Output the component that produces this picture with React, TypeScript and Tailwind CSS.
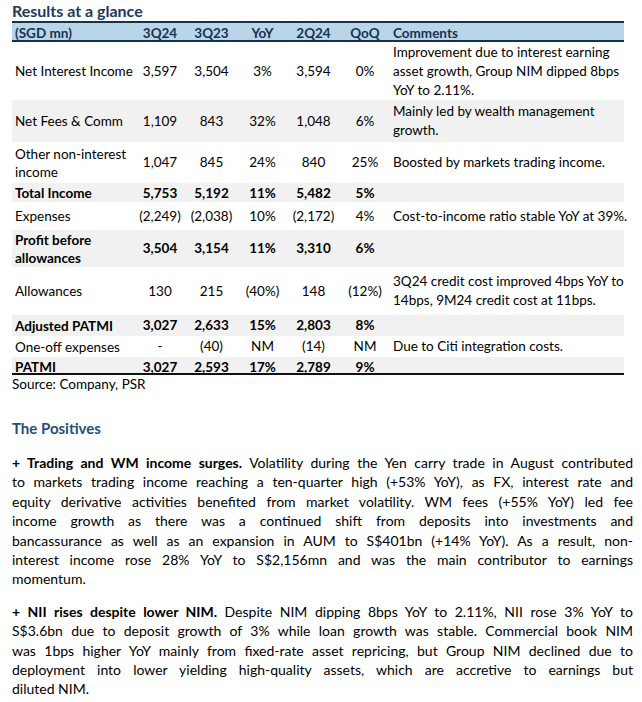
import React from "react";

type Row = {
  label: React.ReactNode;
  vals: string[];
  comment?: React.ReactNode;
  bold?: boolean;
  gray?: boolean;
  h: string;
};

const ROWS: Row[] = [
  {
    label: "Net Interest Income",
    vals: ["3,597", "3,504", "3%", "3,594", "0%"],
    comment: (
      <>
        Improvement due to interest earning
        <br />
        asset growth, Group NIM dipped 8bps
        <br />
        YoY to 2.11%.
      </>
    ),
    h: "h-[58px]",
  },
  {
    label: "Net Fees & Comm",
    vals: ["1,109", "843", "32%", "1,048", "6%"],
    comment: (
      <>
        Mainly led by wealth management
        <br />
        growth.
      </>
    ),
    gray: true,
    h: "h-[42px]",
  },
  {
    label: (
      <>
        Other non-interest
        <br />
        income
      </>
    ),
    vals: ["1,047", "845", "24%", "840", "25%"],
    comment: "Boosted by markets trading income.",
    h: "h-[41px]",
  },
  {
    label: "Total Income",
    vals: ["5,753", "5,192", "11%", "5,482", "5%"],
    bold: true,
    gray: true,
    h: "h-[19px]",
  },
  {
    label: "Expenses",
    vals: ["(2,249)", "(2,038)", "10%", "(2,172)", "4%"],
    comment: "Cost-to-income ratio stable YoY at 39%.",
    h: "h-[28px]",
  },
  {
    label: (
      <>
        Profit before
        <br />
        allowances
      </>
    ),
    vals: ["3,504", "3,154", "11%", "3,310", "6%"],
    bold: true,
    gray: true,
    h: "h-[37px]",
  },
  {
    label: "Allowances",
    vals: ["130", "215", "(40%)", "148", "(12%)"],
    comment: (
      <>
        3Q24 credit cost improved 4bps YoY to
        <br />
        14bps, 9M24 credit cost at 11bps.
      </>
    ),
    h: "h-[48px]",
  },
  {
    label: "Adjusted PATMI",
    vals: ["3,027", "2,633", "15%", "2,803", "8%"],
    bold: true,
    gray: true,
    h: "h-[21px]",
  },
  {
    label: "One-off expenses",
    vals: ["-", "(40)", "NM", "(14)", "NM"],
    comment: "Due to Citi integration costs.",
    h: "h-[21px]",
  },
  {
    label: "PATMI",
    vals: ["3,027", "2,593", "17%", "2,789", "9%"],
    bold: true,
    gray: true,
    h: "h-[18px]",
  },
];

const GRID =
  "grid grid-cols-[122px_52px_51px_51px_51px_52px_1fr] items-center";

const PARA1 = [
  <>
    <b>+ Trading and WM income surges.</b> Volatility during the Yen carry
    trade in August contributed
  </>,
  "to markets trading income reaching a ten-quarter high (+53% YoY), as FX, interest rate and",
  "equity derivative activities benefited from market volatility. WM fees (+55% YoY) led fee",
  "income growth as there was a continued shift from deposits into investments and",
  "bancassurance as well as an expansion in AUM to S$401bn (+14% YoY). As a result, non-",
  "interest income rose 28% YoY to S$2,156mn and was the main contributor to earnings",
  "momentum.",
];

const PARA2 = [
  <>
    <b>+ NII rises despite lower NIM.</b> Despite NIM dipping 8bps YoY to
    2.11%, NII rose 3% YoY to
  </>,
  "S$3.6bn due to deposit growth of 3% while loan growth was stable. Commercial book NIM",
  "was 1bps higher YoY mainly from fixed-rate asset repricing, but Group NIM declined due to",
  "deployment into lower yielding high-quality assets, which are accretive to earnings but",
  "diluted NIM.",
];

const Para = ({ lines }: { lines: React.ReactNode[] }) => (
  <div className="w-[621px] text-[14px] leading-[19.4px] text-black">
    {lines.map((l, i) => (
      <span
        key={i}
        className={`block text-justify ${
          i < lines.length - 1 ? "[text-align-last:justify]" : ""
        }`}
      >
        {l}
      </span>
    ))}
  </div>
);

export default function App() {
  return (
    <div className="w-[642px] h-[702px] bg-white pl-[12px] font-['Lato','Noto_Sans',sans-serif] text-black overflow-hidden">
      {/* titre */}
      <div className="h-[21px] pt-[1px] text-[16px] leading-[20px] font-bold text-[#1b3a5c]">
        Results at a glance
      </div>

      <div className="w-[612px] text-[13.5px]">
        {/* header */}
        <div
          className={`${GRID} h-[21px] bg-[#b9d5e8] border-t-2 border-b-[2.5px] border-[#17324f] font-bold text-[#17324f]`}
        >
          <div className="pl-[3px]">(SGD mn)</div>
          <div className="text-center">3Q24</div>
          <div className="text-center">3Q23</div>
          <div className="text-center">YoY</div>
          <div className="text-center">2Q24</div>
          <div className="text-center">QoQ</div>
          <div className="pl-[2px]">Comments</div>
        </div>

        {ROWS.map((r, i) => (
          <div
            key={i}
            className={`${GRID} ${r.h} ${r.gray ? "bg-[#f1f1f1]" : "bg-white"} ${
              r.bold ? "font-bold" : ""
            } ${i === ROWS.length - 1 ? "border-b-2 border-[#111]" : ""}`}
          >
            <div className="pl-[3px] whitespace-nowrap leading-[18px]">
              {r.label}
            </div>
            {r.vals.map((v, j) => (
              <div key={j} className="text-center whitespace-nowrap">
                {v}
              </div>
            ))}
            <div className="pl-[2px] whitespace-nowrap leading-[19px] font-normal">
              {r.comment}
            </div>
          </div>
        ))}
      </div>

      <div className="text-[13.5px] leading-[16px] pt-[1px]">
        Source: Company, PSR
      </div>

      <div className="mt-[26px] text-[15px] leading-[20px] font-bold text-[#1f4e79]">
        The Positives
      </div>

      <div className="mt-[15px]">
        <Para lines={PARA1} />
      </div>
      <div className="mt-[13px]">
        <Para lines={PARA2} />
      </div>
    </div>
  );
}
